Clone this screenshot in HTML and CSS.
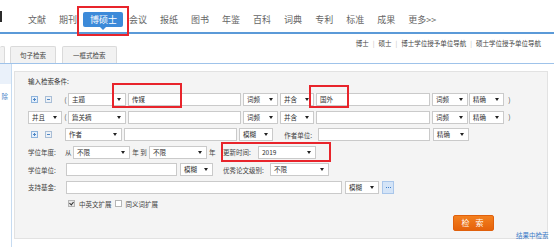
FILE: index.html
```html
<!DOCTYPE html>
<html lang="zh-CN">
<head>
    <meta charset="UTF-8">
    <title>博硕士检索</title>
    <link rel="stylesheet" href="styles.css">
</head>
<body>
    <div class="header">
        <span class="logo-mark"></span>
        <ul class="nav">
            <li>文献</li>
            <li>期刊</li>
            <li class="active">博硕士</li>
            <li>会议</li>
            <li>报纸</li>
            <li>图书</li>
            <li>年鉴</li>
            <li>百科</li>
            <li>词典</li>
            <li>专利</li>
            <li>标准</li>
            <li>成果</li>
            <li>更多&gt;&gt;</li>
        </ul>
    </div>

    <div class="subbar">
        <div class="tabs">
            <span class="tab tab-cut"></span>
            <span class="tab">句子检索</span>
            <span class="tab">一框式检索</span>
        </div>
        <div class="links">
            <a>博士</a><i>|</i><a>硕士</a><i>|</i><a>博士学位授予单位导航</a><i>|</i><a>硕士学位授予单位导航</a>
        </div>
    </div>

    <div class="main">
        <div class="sidebar">
            <div class="side-top"></div>
            <div class="side-text">除</div>
        </div>

        <div class="panel">
            <div class="panel-title">输入检索条件:</div>

            <div class="row">
                <div class="lead">
                    <span class="ico ico-add"></span>
                    <span class="ico ico-del"></span>
                </div>
                <span class="paren">(</span>
                <span class="sel w58">主题</span>
                <span class="inp w113 ml2">传媒</span>
                <span class="sel w35 ml2">词频</span>
                <span class="sel w34 ml2">并含</span>
                <span class="inp w114 ml2">国外</span>
                <span class="sel w36 ml2">词频</span>
                <span class="sel w35 ml1">精确</span>
                <span class="paren ml3">)</span>
            </div>

            <div class="row">
                <div class="lead">
                    <span class="sel w34">并且</span>
                </div>
                <span class="paren">(</span>
                <span class="sel w58">篇关摘</span>
                <span class="inp w113 ml2"></span>
                <span class="sel w35 ml2">词频</span>
                <span class="sel w34 ml2">并含</span>
                <span class="inp w114 ml2"></span>
                <span class="sel w36 ml2">词频</span>
                <span class="sel w35 ml1">精确</span>
                <span class="paren ml3">)</span>
            </div>

            <div class="row">
                <div class="lead">
                    <span class="ico ico-add"></span>
                    <span class="ico ico-del"></span>
                </div>
                <span class="sel w57 ml2">作者</span>
                <span class="inp w113 ml2"></span>
                <span class="sel w34 ml2">模糊</span>
                <span class="label label-right w45">作者单位:</span>
                <span class="inp w112"></span>
                <span class="sel w36 ml3">精确</span>
            </div>

            <div class="row">
                <span class="label w37">学位年度:</span>
                <span class="word w8">从</span>
                <span class="sel w57">不限</span>
                <span class="word w19 center">年 到</span>
                <span class="sel w58">不限</span>
                <span class="word w16 pl2">年</span>
                <span class="label w35">更新时间:</span>
                <span class="sel w58">2019</span>
            </div>

            <div class="row">
                <span class="label w38">学位单位:</span>
                <span class="inp w111"></span>
                <span class="sel w33 ml3">模糊</span>
                <span class="label w47 ml10">优秀论文级别:</span>
                <span class="sel w59">不限</span>
            </div>

            <div class="row">
                <span class="label w38">支持基金:</span>
                <span class="inp w276"></span>
                <span class="sel w34 ml3">模糊</span>
                <span class="more ml3"><b></b><b></b><b></b></span>
            </div>

            <div class="checks">
                <span class="chk checked"></span>
                <span class="chk-label">中英文扩展</span>
                <span class="chk"></span>
                <span class="chk-label">同义词扩展</span>
            </div>

            <div class="actions">
                <button class="btn-search">检 索</button>
            </div>

            <a class="in-result">结果中检索</a>
        </div>
    </div>

    <!-- 标注框 -->
    <div class="mark mark-nav"></div>
    <div class="mark mark-word1"></div>
    <div class="mark mark-word2"></div>
    <div class="mark mark-time"></div>
</body>
</html>
```

FILE: styles.css
```css
* {
    margin: 0;
    padding: 0;
    box-sizing: border-box;
    font-family: "Noto Sans CJK SC", "Noto Sans", sans-serif;
}

body {
    width: 554px;
    height: 247px;
    background: #fff;
    color: #333;
    position: relative;
    overflow: hidden;
}

/* 顶部导航 */
.header {
    height: 34px;
    border-bottom: 2px solid #5b9ad8;
    display: flex;
    align-items: flex-start;
}

.logo-mark {
    width: 2px;
    height: 11px;
    margin-top: 11px;
    background: #2b2b2b;
}

.nav {
    list-style: none;
    display: flex;
    gap: 13px;
    margin-left: 26px;
    margin-top: 12px;
}

.nav li {
    font-size: 9px;
    line-height: 15px;
    height: 15px;
    color: #666;
    white-space: nowrap;
}

.nav li.active {
    position: relative;
    background: #3c8ad9;
    color: #fff;
    border-radius: 2px;
    padding: 0 7px;
    margin: 0 -7px;
    width: 40px;
    text-align: center;
}

.nav li.active::after {
    content: "";
    position: absolute;
    left: 17px;
    top: 15px;
    border-left: 3px solid transparent;
    border-right: 3px solid transparent;
    border-top: 3px solid #3c8ad9;
}

/* 二级栏 */
.subbar {
    height: 30px;
    border-bottom: 1px solid #9fc3ea;
    display: flex;
    justify-content: space-between;
}

.tabs {
    display: flex;
    align-items: flex-end;
    gap: 5px;
}

.tab {
    height: 17px;
    padding: 0 9px;
    font-size: 6.5px;
    line-height: 16px;
    color: #444;
    background: #f2f2f2;
    border: 1px solid #dadada;
    border-bottom: none;
    border-radius: 2px 2px 0 0;
}

.tab-cut {
    width: 5px;
    padding: 0;
    border-left: none;
}

.tabs .tab:nth-child(3) {
    margin-left: 1px;
    padding: 0 10px;
}

.links {
    padding: 4px 13px 0 0;
    font-size: 6.5px;
    line-height: 10px;
    color: #444;
}

.links i {
    font-style: normal;
    color: #bbb;
    margin: 0 4px;
}

/* 主体 */
.main {
    display: flex;
    align-items: flex-start;
}

.sidebar {
    width: 12px;
    height: 184px;
    border-right: 1px solid #c6dbf1;
}

.side-top {
    height: 20px;
    background: #eaf1fa;
}

.side-text {
    font-size: 6.5px;
    line-height: 10px;
    color: #4a86c8;
    margin-top: 7px;
    text-align: right;
    padding-right: 3px;
}

.panel {
    position: relative;
    width: 534px;
    height: 168px;
    margin: 7px 0 0 2px;
    background: #f4f4f4;
    border: 1px solid #e2e2e2;
    padding: 2px 0 0 13px;
}

.panel-title {
    font-size: 6.5px;
    height: 14px;
    line-height: 14px;
    color: #333;
    margin-bottom: 5px;
}

.row {
    display: flex;
    align-items: center;
    height: 13px;
    margin-bottom: 4.6px;
    font-size: 6.5px;
}

.lead {
    width: 35px;
    height: 13px;
    display: flex;
    align-items: center;
}

.ico {
    width: 7px;
    height: 7px;
    border: 1px solid #8fb4dc;
    background: #e6f0fb;
    position: relative;
}

.ico-add {
    margin-left: 3px;
}

.ico-del {
    margin-left: 7px;
    border-color: #a9bed6;
    background: #edf1f6;
}

.ico::before {
    content: "";
    position: absolute;
    left: 1px;
    top: 2px;
    width: 3px;
    height: 1px;
    background: #4f87c5;
}

.ico-add::after {
    content: "";
    position: absolute;
    left: 2px;
    top: 1px;
    width: 1px;
    height: 3px;
    background: #4f87c5;
}

.paren {
    width: 5px;
    text-align: center;
    color: #555;
    font-size: 7px;
}

.sel,
.inp {
    height: 13px;
    border: 1px solid #cacaca;
    background: #fff;
    line-height: 11px;
    padding-left: 3px;
    color: #333;
    white-space: nowrap;
    overflow: hidden;
    flex-shrink: 0;
}

.sel {
    position: relative;
}

.sel::after {
    content: "";
    position: absolute;
    right: 4px;
    top: 4px;
    border-left: 2px solid transparent;
    border-right: 2px solid transparent;
    border-top: 3px solid #222;
}

.label {
    color: #444;
    white-space: nowrap;
    flex-shrink: 0;
}

.label-right {
    text-align: right;
    padding-right: 6px;
}

.word {
    color: #444;
    flex-shrink: 0;
}

.center { text-align: center; }
.pl2 { padding-left: 2px; }

.more {
    width: 12px;
    height: 13px;
    border: 1px solid #a9c6ea;
    background: #d4e4f7;
    display: flex;
    justify-content: center;
    align-items: center;
    gap: 1px;
    flex-shrink: 0;
}

.more b {
    width: 1px;
    height: 1px;
    background: #3f7fca;
}

.checks {
    display: flex;
    align-items: center;
    height: 10px;
    margin-top: 3.4px;
    padding-left: 40px;
    font-size: 6.5px;
}

.chk {
    width: 7px;
    height: 7px;
    border: 1px solid #b5b5b5;
    background: #fff;
    margin-right: 4px;
    position: relative;
}

.chk.checked {
    background: #e8e8e8;
}

.chk.checked::after {
    content: "";
    position: absolute;
    left: 1px;
    top: 0;
    width: 2px;
    height: 3px;
    border-right: 1px solid #333;
    border-bottom: 1px solid #333;
    transform: rotate(40deg);
}

.chk-label {
    color: #444;
    margin-right: 3px;
}

.actions {
    display: flex;
    justify-content: flex-end;
    padding-right: 53px;
    margin-top: 6px;
}

.btn-search {
    width: 41px;
    height: 16px;
    border: 1px solid #e0600c;
    border-radius: 2px;
    background: linear-gradient(#f3801f, #e5620b);
    color: #fff;
    font-size: 8px;
    letter-spacing: 2px;
    line-height: 14px;
}

.in-result {
    position: absolute;
    left: 501px;
    top: 158px;
    font-size: 6.5px;
    line-height: 10px;
    color: #3b7bc8;
    white-space: nowrap;
}

/* 宽度 */
.w8 { width: 8px; }
.w16 { width: 16px; }
.w19 { width: 19px; }
.w33 { width: 33px; }
.w34 { width: 34px; }
.w35 { width: 35px; }
.w36 { width: 36px; }
.w37 { width: 37px; }
.w38 { width: 38px; }
.w45 { width: 45px; }
.w47 { width: 47px; }
.w57 { width: 57px; }
.w58 { width: 58px; }
.w59 { width: 59px; }
.w111 { width: 111px; }
.w112 { width: 112px; }
.w113 { width: 113px; }
.w114 { width: 114px; }
.w276 { width: 276px; }

.ml1 { margin-left: 1px; }
.ml2 { margin-left: 2px; }
.ml3 { margin-left: 3px; }
.ml10 { margin-left: 10px; }

/* 红色标注框 */
.mark {
    position: absolute;
    border: 2px solid #e8242b;
}

.mark-nav { left: 77px; top: 6px; width: 52px; height: 30px; }
.mark-word1 { left: 112px; top: 83px; width: 70px; height: 25px; }
.mark-word2 { left: 309px; top: 85px; width: 40px; height: 23px; }
.mark-time { left: 221px; top: 142px; width: 110px; height: 20px; }
```
